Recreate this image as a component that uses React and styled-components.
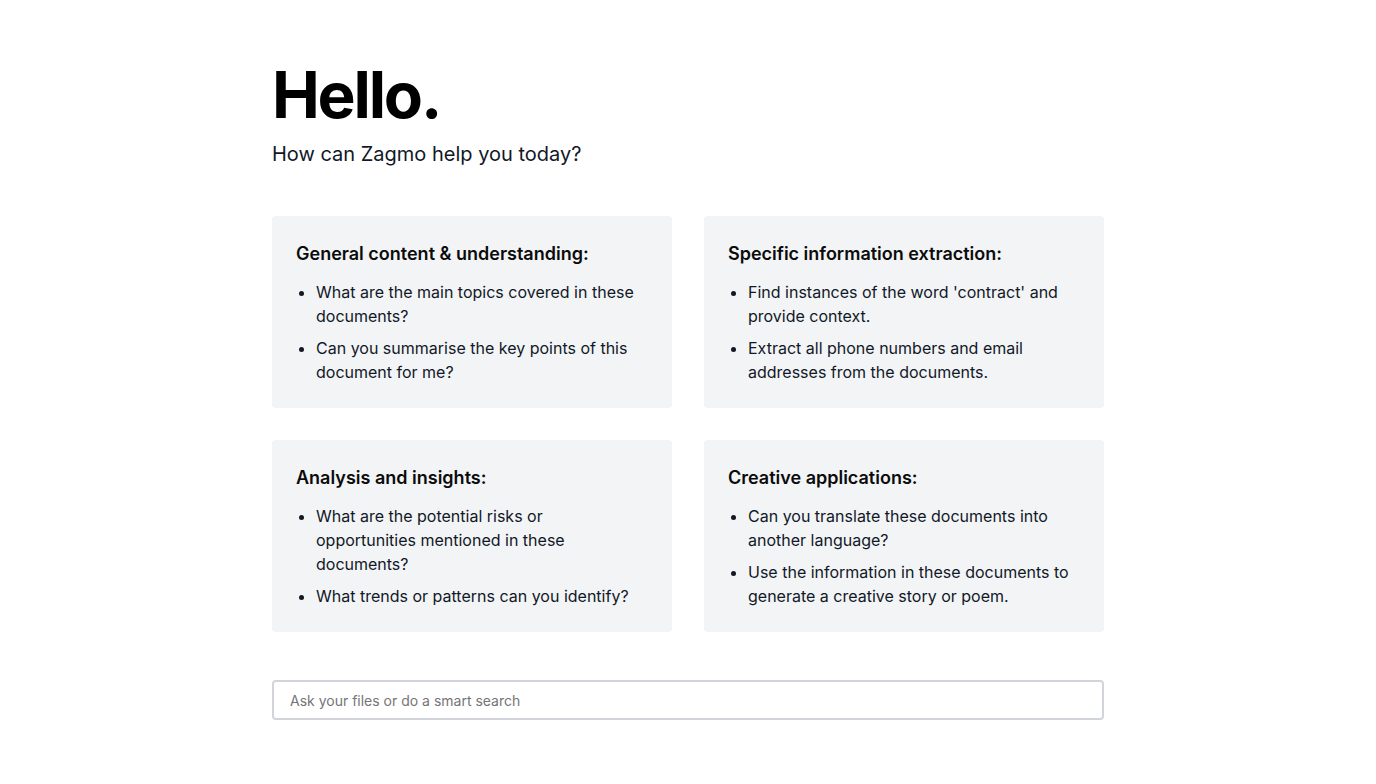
import React from 'react';
import styled, {createGlobalStyle} from 'styled-components';

const GlobalStyle = createGlobalStyle`
	* { box-sizing: border-box; }
	body {
		margin: 0;
		background: #ffffff;
		font-family: Inter, "Noto Sans", sans-serif;
		color: #111827;
	}
`;

const Page = styled.main`
	width: 832px;
	margin: 0 auto;
	padding-top: 63px;
	display: flex;
	flex-direction: column;
`;

const Title = styled.h1`
	margin: 0;
	font-size: 64px;
	line-height: 64px;
	font-weight: 700;
	color: #000000;
	letter-spacing: -2.2px;
`;

const Subtitle = styled.p`
	margin: 13px 0 0;
	font-size: 20px;
	line-height: 28px;
	color: #111827;
`;

const CardGrid = styled.section`
	margin-top: 48px;
	display: grid;
	grid-template-columns: 1fr 1fr;
	gap: 32px;
`;

const Card = styled.article`
	background-color: #f3f4f6;
	border-radius: 4px;
	padding: 24px;
`;

const CardTitle = styled.h2`
	margin: 0 0 12px;
	font-size: 18px;
	line-height: 28px;
	font-weight: 600;
	color: #0b0b0b;
`;

const PromptList = styled.ul`
	margin: 0;
	padding: 0 4px 0 20px;
	display: flex;
	flex-direction: column;
	gap: 8px;
`;

const Prompt = styled.li`
	font-size: 16px;
	line-height: 24px;
	color: #111827;
`;

const SearchInput = styled.input`
	margin-top: 48px;
	height: 40px;
	width: 100%;
	border: 2px solid #d1d5db;
	border-radius: 4px;
	padding: 0 16px;
	font-family: inherit;
	font-size: 14px;
	color: #111827;
	outline: none;

	::placeholder {
		color: #6b7280;
	}
`;

const sections = [
	{
		title: 'General content & understanding:',
		prompts: [
			'What are the main topics covered in these documents?',
			'Can you summarise the key points of this document for me?'
		]
	},
	{
		title: 'Specific information extraction:',
		prompts: [
			"Find instances of the word 'contract' and provide context.",
			'Extract all phone numbers and email addresses from the documents.'
		]
	},
	{
		title: 'Analysis and insights:',
		prompts: [
			'What are the potential risks or opportunities mentioned in these documents?',
			'What trends or patterns can you identify?'
		]
	},
	{
		title: 'Creative applications:',
		prompts: [
			'Can you translate these documents into another language?',
			'Use the information in these documents to generate a creative story or poem.'
		]
	}
];

const App = () => {
	return (
		<>
			<GlobalStyle />
			<Page>
				<Title>Hello.</Title>
				<Subtitle>How can Zagmo help you today?</Subtitle>
				<CardGrid>
					{sections.map(section => (
						<Card key={section.title}>
							<CardTitle>{section.title}</CardTitle>
							<PromptList>
								{section.prompts.map(prompt => (
									<Prompt key={prompt}>{prompt}</Prompt>
								))}
							</PromptList>
						</Card>
					))}
				</CardGrid>
				<SearchInput type="text" placeholder="Ask your files or do a smart search" />
			</Page>
		</>
	);
}

export default App;
